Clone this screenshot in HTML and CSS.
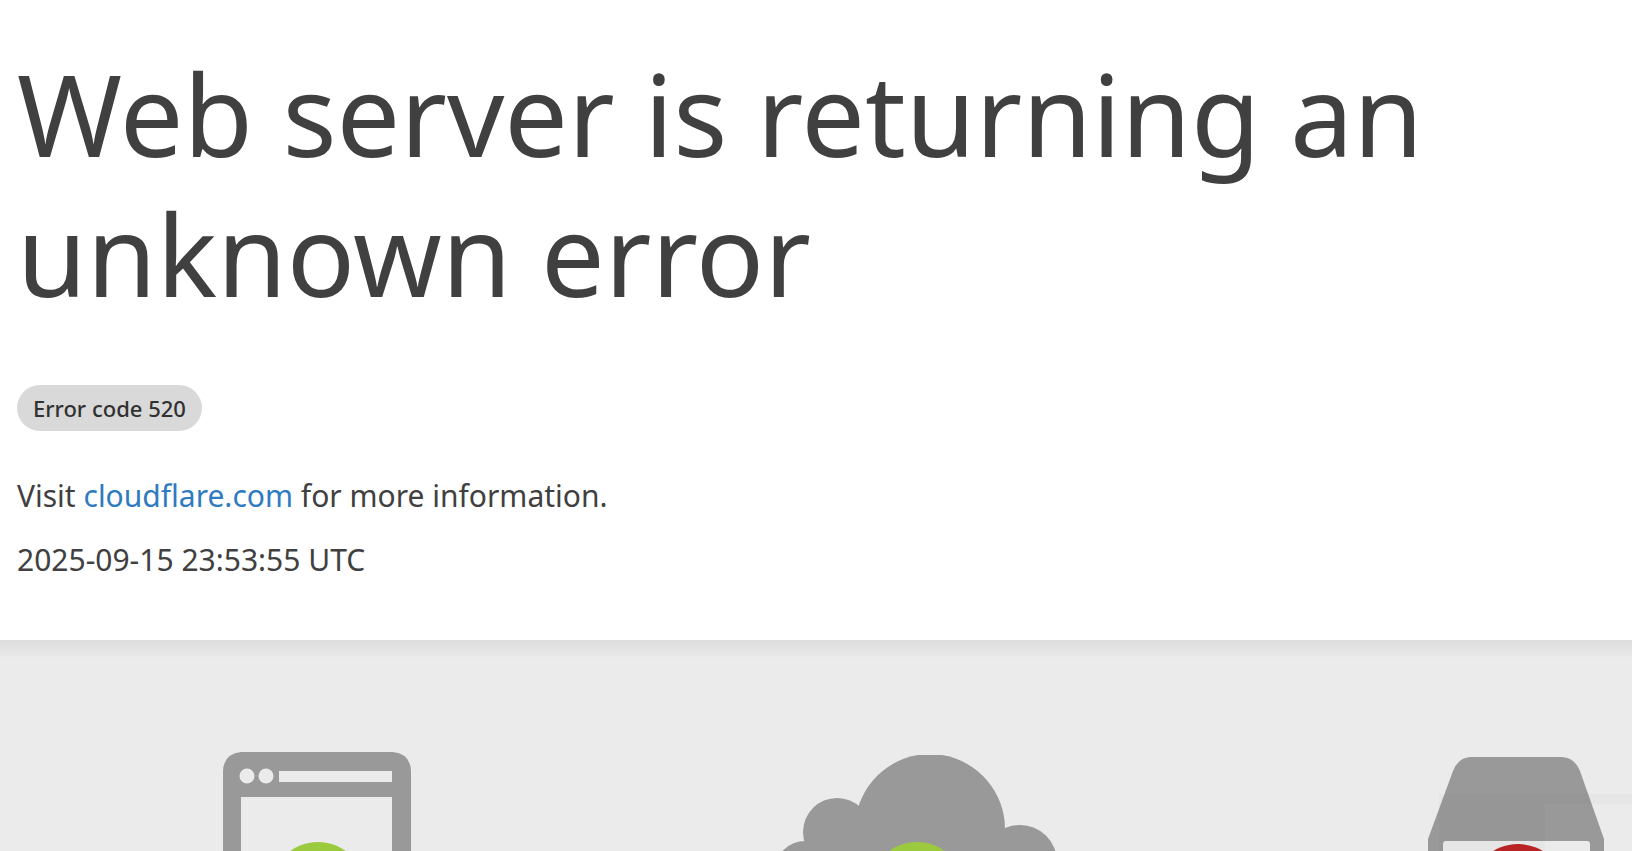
FILE: index.html
```html
<!DOCTYPE html>
<html lang="en">
<head>
  <meta charset="UTF-8">
  <meta name="viewport" content="width=device-width, initial-scale=1.0">
  <title>520: Web server is returning an unknown error</title>
  <link rel="stylesheet" href="styles.css">
</head>
<body>
  <!-- Header Section -->
  <header class="header">
    <h1>Web server is returning an unknown error</h1>
    <span class="code-label">Error code 520</span>
    <p>Visit <a href="https://www.cloudflare.com/">cloudflare.com</a> for more information.</p>
    <p>2025-09-15 23:53:55 UTC</p>
  </header>

  <!-- Status Section -->
  <main class="status">
    <div class="status-item">
      <svg class="icon" width="188" height="180" viewBox="0 0 188 180" role="img" aria-label="Browser working">
        <path class="shape" fill-rule="evenodd" d="M18 0H170Q188 2 188 20V180H0V20Q0 2 18 0ZM56 19V30H169V19ZM18 45V160H169V45Z"/>
        <circle class="hole" cx="24" cy="24" r="7.5"/>
        <circle class="hole" cx="43" cy="24" r="7.5"/>
        <circle class="ok" cx="95" cy="137" r="47"/>
        <path class="mark" d="M72 138l16 16 30-34"/>
      </svg>
    </div>
    <div class="status-item">
      <svg class="icon" width="288" height="180" viewBox="0 0 288 180" role="img" aria-label="Cloud working">
        <path class="shape" d="M64 77H247V170H34V100Z"/>
        <path class="shape" d="M82 77A75 75 0 0 1 145 3H169A75 75 0 0 1 232 77Z"/>
        <circle class="shape" cx="64" cy="80" r="34"/>
        <circle class="shape" cx="32" cy="119" r="30"/>
        <circle class="shape" cx="247" cy="110" r="37"/>
        <circle class="ok" cx="144" cy="137" r="47"/>
        <path class="mark" d="M121 138l16 16 30-34"/>
      </svg>
    </div>
    <div class="status-item host">
      <svg class="icon" width="176" height="180" viewBox="0 0 176 180" role="img" aria-label="Host error">
        <path class="shape" d="M42 5H134Q147 6 152 19L176 87V180H0V87L25 19Q30 6 42 5Z"/>
        <rect class="hole" x="15" y="89" width="147" height="70" rx="3"/>
        <circle class="bad" cx="90" cy="139" r="47"/>
        <path class="mark" d="M72 121l36 36M108 121l-36 36"/>
      </svg>
      <div class="shade"></div>
    </div>
  </main>
</body>
</html>
```

FILE: styles.css
```css
* {
  margin: 0;
  padding: 0;
  box-sizing: border-box;
}

body {
  font-family: "Noto Sans", sans-serif;
  display: flex;
  flex-direction: column;
  height: 100vh;
  overflow: hidden;
  font-size: 30px;
  line-height: 45px;
  color: #404040;
  background-color: #fff;
}

.header {
  padding: 43px 17px 58px;
}

h1 {
  margin-bottom: 62px;
  font-size: 113px;
  font-weight: 400;
  line-height: 140px;
}

.code-label {
  display: block;
  width: fit-content;
  margin-bottom: 42px;
  padding: 8px 16px;
  border-radius: 23px;
  font-size: 22px;
  font-weight: 500;
  line-height: 30px;
  color: #313131;
  background-color: #d9d9d9;
}

p + p {
  margin-top: 19px;
}

a {
  color: #2f7bbf;
  text-decoration: none;
}

.status {
  display: grid;
  flex: 1;
  grid-template-columns: 1fr 1fr 387px;
  min-height: 0;
  padding: 112px 28px 0 17px;
  overflow: hidden;
  background: #ebebeb linear-gradient(#dddddd, #ebebeb) no-repeat 0 0 / 100% 19px;
}

.status-item {
  display: flex;
  align-items: flex-start;
  justify-content: center;
}

.host {
  position: relative;
  justify-content: flex-end;
}

.icon {
  display: block;
  flex: none;
}

.shape {
  fill: #999;
}

.hole {
  fill: #ebebeb;
}

.ok {
  fill: #9bca3e;
}

.bad {
  fill: #bd2426;
}

.mark {
  fill: none;
  stroke: #ebebeb;
  stroke-width: 12;
}

/* faint overlay in the corner */
.shade {
  position: absolute;
  top: 42px;
  right: -28px;
  bottom: 0;
  width: 193px;
  border-top: 10px solid rgba(0, 0, 0, 0.02);
  border-left: 106px solid rgba(0, 0, 0, 0.02);
}
```
